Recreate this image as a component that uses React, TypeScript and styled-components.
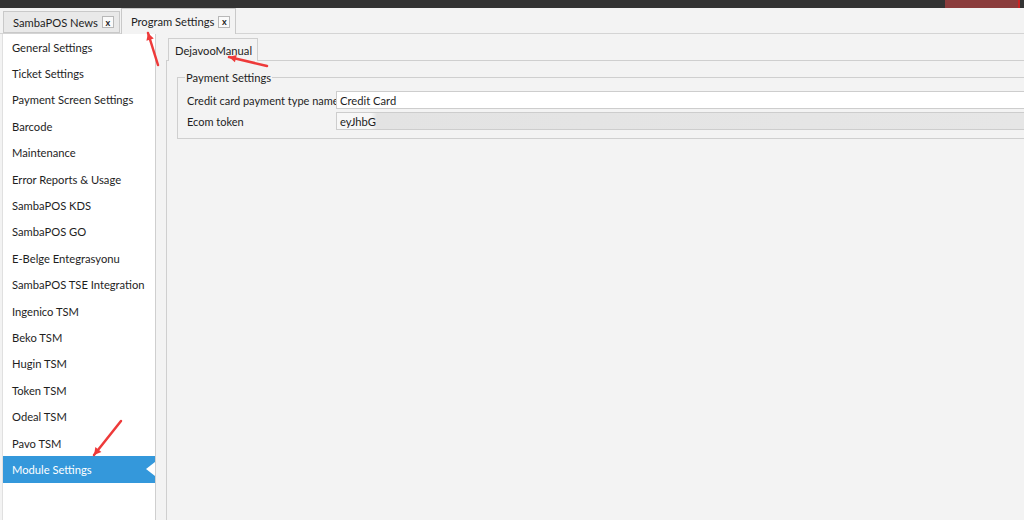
import styled, { createGlobalStyle } from "styled-components";

const GlobalStyle = createGlobalStyle`
  html, body {
    margin: 0;
    padding: 0;
    background: #f3f3f3;
    font-family: Lato, "Open Sans", sans-serif;
    font-size: 11.2px;
    color: #1e1e1e;
    overflow: hidden;
  }
`;

const menuItems = [
  "General Settings",
  "Ticket Settings",
  "Payment Screen Settings",
  "Barcode",
  "Maintenance",
  "Error Reports & Usage",
  "SambaPOS KDS",
  "SambaPOS GO",
  "E-Belge Entegrasyonu",
  "SambaPOS TSE Integration",
  "Ingenico TSM",
  "Beko TSM",
  "Hugin TSM",
  "Token TSM",
  "Odeal TSM",
  "Pavo TSM",
  "Module Settings",
];

const Page = styled.div`
  position: relative;
  width: 1024px;
  height: 520px;
  display: flex;
  flex-direction: column;
`;

const TopBar = styled.div`
  height: 8px;
  background: #333;
  display: flex;
  justify-content: flex-end;
  flex-shrink: 0;
`;

const CloseBlock = styled.div`
  width: 73px;
  height: 8px;
  background: #8b3c3c;
  margin-right: 4px;
  border-right: 2px solid #c22;
`;

const DocTabs = styled.div`
  height: 25px;
  display: flex;
  align-items: flex-end;
  padding-left: 3px;
  border-bottom: 1px solid #d4d4d4;
  flex-shrink: 0;
`;

const DocTab = styled.div<{ $active?: boolean }>`
  display: flex;
  align-items: center;
  gap: 4px;
  box-sizing: border-box;
  height: ${(p) => (p.$active ? "26px" : "22px")};
  margin-bottom: ${(p) => (p.$active ? "-1px" : "0")};
  padding: 0 5px 0 9px;
  background: ${(p) => (p.$active ? "#f3f3f3" : "#e9e9e9")};
  border: 1px solid #c9c9c9;
  border-bottom: ${(p) => (p.$active ? "none" : "1px solid #c9c9c9")};
  margin-right: 1px;
  white-space: nowrap;
`;

const CloseBox = styled.span`
  width: 10px;
  height: 10px;
  border: 1px solid #b8b8b8;
  background: #fafafa;
  display: flex;
  align-items: center;
  justify-content: center;
  font-size: 9px;
  font-weight: bold;
  line-height: 1;
  color: #222;
`;

const Body = styled.div`
  flex: 1;
  display: flex;
  min-height: 0;
`;

const Sidebar = styled.div`
  width: 152px;
  margin-left: 2px;
  background: #fff;
  border-left: 1px solid #e0e0e0;
  border-right: 1px solid #cfcfcf;
  flex-shrink: 0;
`;

const MenuItem = styled.div<{ $active?: boolean }>`
  position: relative;
  height: 26.4px;
  display: flex;
  align-items: center;
  padding-left: 9px;
  white-space: nowrap;
  background: ${(p) => (p.$active ? "#3498db" : "transparent")};
  color: ${(p) => (p.$active ? "#fff" : "#1e1e1e")};

  &::after {
    content: "";
    display: ${(p) => (p.$active ? "block" : "none")};
    position: absolute;
    right: 0;
    top: 50%;
    transform: translateY(-50%);
    border-top: 7px solid transparent;
    border-bottom: 7px solid transparent;
    border-right: 9px solid #fff;
  }
`;

const Content = styled.div`
  flex: 1;
  display: flex;
  flex-direction: column;
  margin-left: 10px;
  min-width: 0;
`;

const InnerTabs = styled.div`
  height: 25px;
  display: flex;
  align-items: flex-end;
  margin-top: 1px;
  border-bottom: 1px solid #cfcfcf;
  flex-shrink: 0;
`;

const InnerTab = styled.div`
  box-sizing: border-box;
  height: 23px;
  margin-bottom: -1px;
  margin-left: 2px;
  padding: 0 5px 0 6px;
  display: flex;
  align-items: center;
  background: #f3f3f3;
  border: 1px solid #cfcfcf;
  border-bottom: none;
`;

const Panel = styled.div`
  flex: 1;
  border-left: 1px solid #cfcfcf;
  padding: 10px 0 0 10px;
`;

const GroupBox = styled.fieldset`
  margin: 0;
  padding: 7px 0 5px 9px;
  border: 1px solid #cfcfcf;
  border-right: none;
`;

const Legend = styled.legend`
  padding: 0 1px;
  margin-left: -2px;
`;

const Row = styled.div`
  display: flex;
  align-items: center;
  height: 18px;
  margin-bottom: 3px;
`;

const Label = styled.div`
  width: 149px;
  flex-shrink: 0;
  white-space: nowrap;
  font-size: 11px;
`;

const Field = styled.div<{ $blurred?: boolean }>`
  flex: 1;
  height: 18px;
  box-sizing: border-box;
  border: 1px solid #cdcdcd;
  border-right: none;
  padding-left: 3px;
  display: flex;
  align-items: center;
  background: ${(p) =>
    p.$blurred
      ? "linear-gradient(90deg, #f7f7f7 0, #f7f7f7 34px, #e3e3e3 40px, #e6e6e6 100%)"
      : "#fff"};
`;

const Overlay = styled.svg`
  position: absolute;
  left: 0;
  top: 0;
  pointer-events: none;
`;

const Arrow = ({ x1, y1, x2, y2 }: { x1: number; y1: number; x2: number; y2: number }) => {
  const ang = Math.atan2(y2 - y1, x2 - x1);
  const len = 8;
  const spread = 0.5;
  const ax = x2 - len * Math.cos(ang - spread);
  const ay = y2 - len * Math.sin(ang - spread);
  const bx = x2 - len * Math.cos(ang + spread);
  const by = y2 - len * Math.sin(ang + spread);
  return (
    <g>
      <line x1={x1} y1={y1} x2={x2} y2={y2} stroke="#ee3a3a" strokeWidth={2.5} strokeLinecap="round" />
      <polygon points={`${x2},${y2} ${ax},${ay} ${bx},${by}`} fill="#ee3a3a" />
    </g>
  );
};

export default function App() {
  return (
    <>
      <GlobalStyle />
      <Page>
        <TopBar>
          <CloseBlock />
        </TopBar>
        <DocTabs>
          <DocTab>
            SambaPOS News <CloseBox>x</CloseBox>
          </DocTab>
          <DocTab $active>
            Program Settings <CloseBox>x</CloseBox>
          </DocTab>
        </DocTabs>
        <Body>
          <Sidebar>
            {menuItems.map((m) => (
              <MenuItem key={m} $active={m === "Module Settings"}>
                {m}
              </MenuItem>
            ))}
          </Sidebar>
          <Content>
            <InnerTabs>
              <InnerTab>DejavooManual</InnerTab>
            </InnerTabs>
            <Panel>
              <GroupBox>
                <Legend>Payment Settings</Legend>
                <Row>
                  <Label>Credit card payment type name</Label>
                  <Field>Credit Card</Field>
                </Row>
                <Row>
                  <Label>Ecom token</Label>
                  <Field $blurred>eyJhbG</Field>
                </Row>
              </GroupBox>
            </Panel>
          </Content>
        </Body>
        <Overlay width={1024} height={520}>
          <Arrow x1={158} y1={65} x2={148} y2={33} />
          <Arrow x1={267} y1={66} x2={229} y2={57} />
          <Arrow x1={121} y1={421} x2={94} y2={455} />
        </Overlay>
      </Page>
    </>
  );
}
